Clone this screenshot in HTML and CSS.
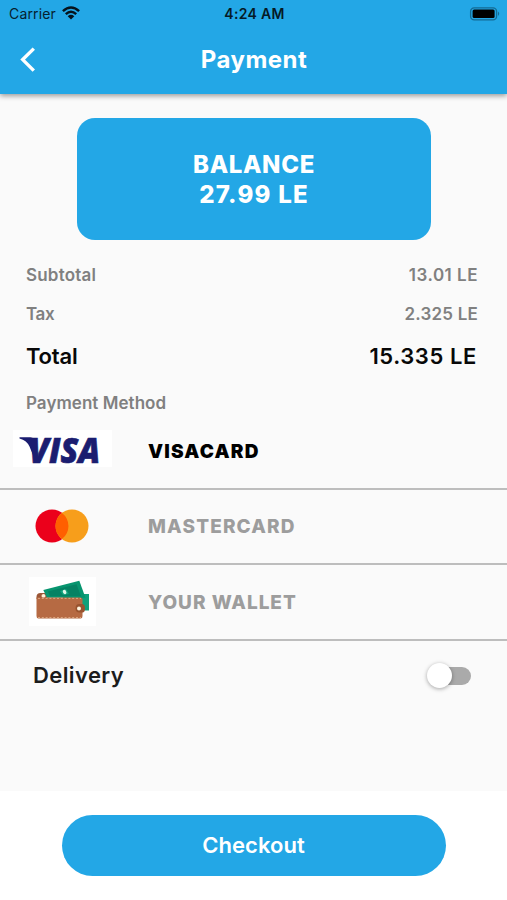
FILE: index.html
```html
<!DOCTYPE html>
<html lang="en">
<head>
<meta charset="utf-8">
<title>Payment</title>
<link rel="stylesheet" href="styles.css">
</head>
<body>
<div class="screen">
  <header class="app-bar">
    <div class="status">
      <div class="carrier"><span>Carrier</span>
        <svg class="wifi" width="18" height="14" viewBox="0 0 18 14"><g fill="none" stroke="#06131c" stroke-width="2.5"><path d="M.9 5.1Q9-2.1 17.1 5.1"/><path d="M3.8 8.1Q9 3.5 14.2 8.1"/></g><path d="M5.7 10.2Q9 7.5 12.3 10.2L9 13.6Z" fill="#06131c"/></svg>
      </div>
      <span class="clock">4:24 AM</span>
      <svg class="battery" width="31" height="14" viewBox="0 0 31 14"><rect x="1.6" y=".8" width="26" height="12" rx="3.6" fill="none" stroke="#146b94" stroke-width="1.3"/><rect x="3.6" y="2.5" width="22" height="8.6" rx="1.5" fill="#000"/><path d="M29 4.6Q31.4 6.8 29 9Z" fill="#146b94"/></svg>
    </div>
    <div class="title-bar">
      <svg class="back" width="18" height="26" viewBox="0 0 18 26"><path d="M14.8 1.6 3.7 12.6 14.8 23.6" fill="none" stroke="#fff" stroke-width="3.4"/></svg>
      <h1 class="title">Payment</h1>
    </div>
  </header>
  <main class="content">
    <section class="balance"><span class="balance-label">BALANCE</span><span class="balance-value">27.99 LE</span></section>
    <section class="summary">
      <div class="line"><span class="subtotal">Subtotal</span><span class="amount subtotal-value">13.01 LE</span></div>
      <div class="line"><span class="tax-label">Tax</span><span class="amount">2.325 LE</span></div>
      <div class="line total"><span class="total-label">Total</span><span class="total-value">15.335 LE</span></div>
      <div class="line method">Payment Method</div>
    </section>
    <section class="methods">
      <div class="option selected">
        <div class="logo">
          <svg width="124" height="74" viewBox="0 0 124 74"><path fill="#fff" d="M13 16h99v37H13z"/><path d="M19.5 23.2H30.5Q33.5 23.4 34.3 26L38 42 35 46 29.5 32.5Q27 26.5 19.5 24.4Z" fill="#1b1d70"/><text class="visa" x="29" y="48.6" textLength="71" lengthAdjust="spacingAndGlyphs">VISA</text></svg>
        </div><span class="name visa-name">VISACARD</span>
      </div>
      <div class="option">
        <div class="logo">
          <svg width="124" height="74" viewBox="0 0 124 74"><circle cx="52" cy="37" r="16.5" fill="#eb001b"/><circle cx="72" cy="37" r="16.5" fill="#f79e1b"/><path d="M62 23.9a16.5 16.5 0 0 1 0 26.2 16.5 16.5 0 0 1 0-26.2" fill="#ff5f00"/></svg>
        </div><span class="name master-name">MASTERCARD</span>
      </div>
      <div class="option">
        <div class="logo">
          <svg width="124" height="74" viewBox="0 0 124 74"><path fill="#fff" d="M29 12h67v49H29z"/><path d="M36.5 32q0-4 4-4H47v6H36.5Z" fill="#9b5737"/><circle cx="43.5" cy="31" r="2" fill="#fff0d9"/><path d="M63 29h26v16.5H63z" fill="#0fa07b"/><path d="m43.3 25 36-9.3 6.2 17H47Z" fill="#07956f"/><path d="m48 26.5 28.5-7.3 4.4 12H50Z" fill="#058263"/><path d="m60 26 6-2 3 5-6 1Z" fill="#11a27c"/><ellipse cx="64.6" cy="27" rx="1.7" ry="2.2" transform="rotate(-30 64.6 27)" fill="#def7e9"/><path d="M36.5 32.5H80q2.5 0 2.5 1.5v17q0 2.5-2 2.5H38.5q-2 0-2-2.5Z" fill="#b66a43"/><path d="M38 33.4h43M38 52.6h43" stroke="#dda883" stroke-width="1" stroke-dasharray="2 1.8"/><path d="M82.5 39h-3q-4 0-4 4.3t4 4.3h3.5q2-.5 2-4.3T82.5 39Z" fill="#98532f"/><circle cx="79" cy="43.5" r="2" fill="#fff4df"/></svg>
        </div><span class="name wallet-name">YOUR WALLET</span>
      </div>
    </section>
    <section class="delivery"><span class="delivery-label">Delivery</span><div class="switch"><div class="thumb"></div></div></section>
  </main>
  <footer class="footer"><button class="checkout">Checkout</button></footer>
</div>
</body>
</html>
```
FILE: styles.css
```css
* { box-sizing: border-box; }
body { margin: 0; font-family: Inter, "Liberation Sans", sans-serif; background: #fafafa; }
.screen { width: 507px; height: 900px; display: flex; flex-direction: column; overflow: hidden; background: #fafafa; }
.app-bar { height: 94px; background: #23a7e6; box-shadow: 0 2px 5px rgba(0,0,0,.38); }
.status { height: 27px; display: grid; grid-template-columns: 1fr auto 1fr; align-items: center; padding: 0 7px 0 9px; color: #06212f; font-size: 14px; line-height: 18px; }
.carrier { display: flex; gap: 6px; align-items: center; letter-spacing: .15px; }
.wifi { margin-bottom: 2px; }
.clock { font-weight: 600; color: #051a26; letter-spacing: .3px; }
.battery { justify-self: end; }
.title-bar { height: 66px; display: grid; grid-template-columns: 60px 1fr 60px; align-items: center; }
.back { margin-left: 19px; }
.title { margin: 0; padding-left: 1px; text-align: center; color: #fff; font-size: 24px; line-height: 30px; font-weight: 700; letter-spacing: .45px; }
.content { height: 697px; padding-top: 24px; }
.balance { width: 354px; height: 122px; margin: 0 0 0 77px; padding-top: 1px; border-radius: 18px; background: #23a7e6; color: #fff; display: flex; flex-direction: column; align-items: center; justify-content: center; font-size: 24px; line-height: 30px; font-weight: 800; }
.balance-label { letter-spacing: .65px; }
.balance-value { letter-spacing: 1.25px; }
.summary { padding: 15px 29px 0 26px; color: #808080; font-size: 17px; font-weight: 600; letter-spacing: .2px; }
.line { height: 39px; display: flex; align-items: center; justify-content: space-between; }
.subtotal-value { letter-spacing: .5px; }
.tax-label { letter-spacing: -.4px; }
.total { height: 46px; color: #080808; font-size: 22px; }
.total-label { letter-spacing: -.2px; }
.total-value { letter-spacing: .6px; margin-right: 1px; }
.method { height: 48px; letter-spacing: .05px; }
.methods { margin-top: -13px; }
.option { height: 75.5px; display: flex; align-items: center; border-bottom: 2px solid #bdbdbd; color: #9d9d9d; }
.selected { color: #000; }
.logo { width: 148px; height: 74px; }
.name { padding-top: 1px; font-size: 19px; font-weight: 800; letter-spacing: 1.15px; }
.visa-name { font-weight: 900; letter-spacing: 1.2px; }
.wallet-name { padding-top: 2px; letter-spacing: 1px; }
.visa { font-family: "Open Sans", sans-serif; font-size: 36px; font-weight: 800; font-style: italic; fill: #1b1d70; stroke: #1b1d70; stroke-width: .7px; }
.delivery { height: 70px; display: flex; align-items: center; justify-content: space-between; padding: 0 36px 0 33px; color: #1c1c1c; font-size: 22px; font-weight: 600; letter-spacing: .4px; }
.delivery-label { padding-bottom: 1px; }
.switch { width: 44px; height: 26px; position: relative; display: flex; align-items: center; }
.switch::before { content: ""; position: absolute; left: 8px; right: 0; top: 4px; height: 18px; border-radius: 9px; background: #aaa; }
.thumb { position: relative; width: 25px; height: 25px; border-radius: 50%; background: #fff; box-shadow: 0 1px 4px rgba(0,0,0,.35); }
.footer { height: 109px; background: #fff; display: flex; justify-content: center; align-items: center; padding-bottom: 1px; }
.checkout { width: 384px; height: 61px; border: 0; border-radius: 31px; background: #23a7e6; color: #fff; font: 600 22px/28px Inter, sans-serif; letter-spacing: .05px; padding: 0 0 1px; }
```
